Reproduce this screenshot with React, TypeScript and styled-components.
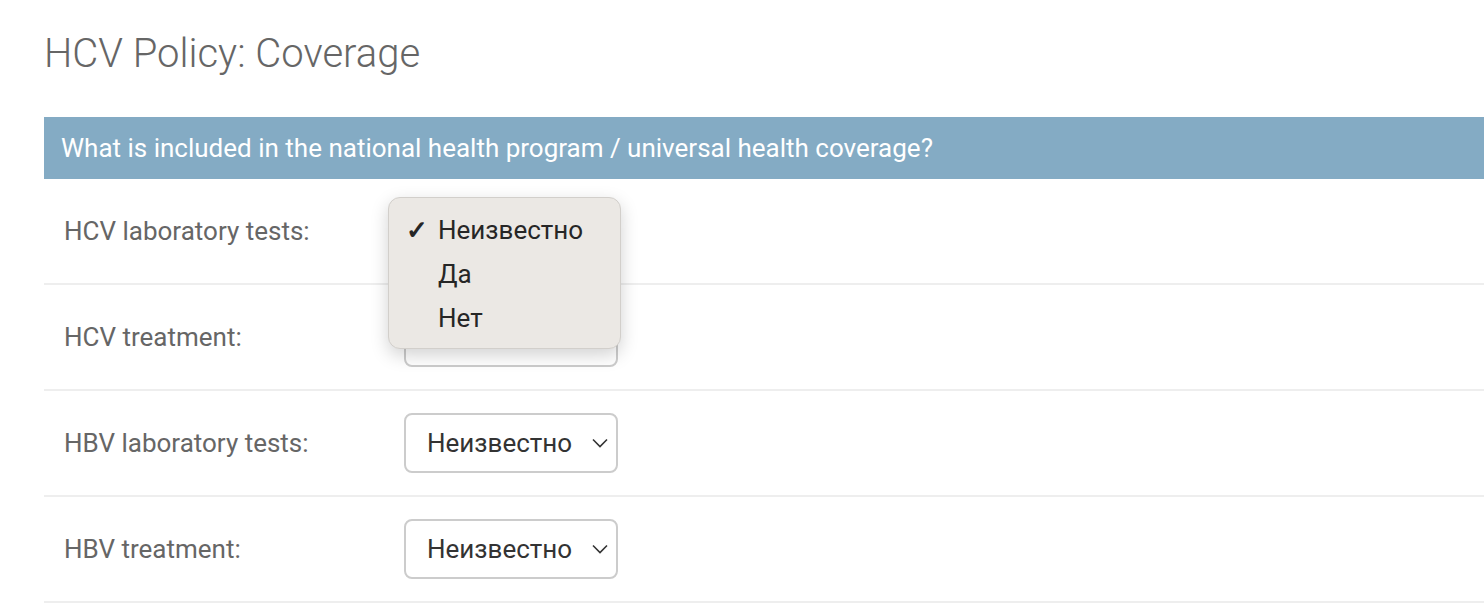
import React from 'react';
import styled, { createGlobalStyle } from 'styled-components';

const GlobalStyle = createGlobalStyle`
  html, body {
    margin: 0;
    padding: 0;
    background: #fff;
  }
  body {
    font-family: Roboto, "Liberation Sans", Arial, sans-serif;
    overflow: hidden;
  }
`;

const fields = [
  { label: 'HCV laboratory tests:', open: true },
  { label: 'HCV treatment:', open: false },
  { label: 'HBV laboratory tests:', open: false },
  { label: 'HBV treatment:', open: false },
];

const options = ['Неизвестно', 'Да', 'Нет'];

const Page = styled.div`
  padding: 30px 0 0 44px;
  width: 1440px;
`;

const Title = styled.h1`
  margin: 0 0 39px 0;
  font-size: 40px;
  line-height: 48px;
  font-weight: 300;
  color: #666;
`;

const Fieldset = styled.section`
  display: flex;
  flex-direction: column;
`;

const Caption = styled.h2`
  margin: 0;
  height: 62px;
  padding: 0 17px;
  display: flex;
  align-items: center;
  background: #84abc4;
  color: #fff;
  font-size: 26px;
  font-weight: 400;
`;

const Row = styled.div`
  position: relative;
  display: flex;
  align-items: center;
  height: 104px;
  padding: 0 20px;
  border-bottom: 2px solid #eee;
`;

const Label = styled.label`
  width: 340px;
  font-size: 26px;
  color: #666;
`;

const Select = styled.div`
  box-sizing: border-box;
  width: 214px;
  height: 60px;
  padding: 0 8px 0 21px;
  display: flex;
  align-items: center;
  justify-content: space-between;
  border: 2px solid #ccc;
  border-radius: 8px;
  font-size: 26px;
  color: #333;
  background: #fff;
`;

const Chevron = () => (
  <svg width="16" height="10" viewBox="0 0 16 10">
    <path d="M1 1.5 L8 8.5 L15 1.5" fill="none" stroke="#333" strokeWidth="1.6" />
  </svg>
);

const Menu = styled.ul`
  position: absolute;
  left: 344px;
  top: 18px;
  z-index: 2;
  box-sizing: border-box;
  width: 233px;
  margin: 0;
  padding: 10px 0 8px;
  list-style: none;
  background: #ebe8e4;
  border: 1px solid #d2cfcb;
  border-radius: 12px;
  box-shadow: 0 6px 18px rgba(0, 0, 0, 0.18);
`;

const Item = styled.li`
  display: flex;
  align-items: center;
  height: 44px;
  padding-left: 17px;
  font-size: 26px;
  color: #262626;
`;

const Check = styled.span<{ $on: boolean }>`
  width: 32px;
  font-size: 26px;
  font-weight: 700;
  visibility: ${(p) => (p.$on ? 'visible' : 'hidden')};
`;

export default function App() {
  return (
    <Page>
      <GlobalStyle />
      <Title>HCV Policy: Coverage</Title>
      <Fieldset>
        <Caption>What is included in the national health program / universal health coverage?</Caption>
        {fields.map((f) => (
          <Row key={f.label}>
            <Label>{f.label}</Label>
            <Select>
              <span>Неизвестно</span>
              <Chevron />
            </Select>
            {f.open && (
              <Menu>
                {options.map((o, i) => (
                  <Item key={o}>
                    <Check $on={i === 0}>✓</Check>
                    {o}
                  </Item>
                ))}
              </Menu>
            )}
          </Row>
        ))}
      </Fieldset>
    </Page>
  );
}
